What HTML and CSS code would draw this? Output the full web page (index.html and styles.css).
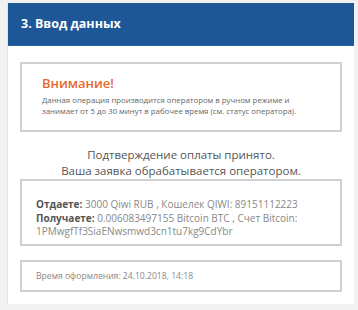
FILE: index.html
```html
<!DOCTYPE html>
<html lang="ru">
<head>
  <meta charset="UTF-8">
  <meta name="viewport" content="width=device-width, initial-scale=1.0">
  <title>Ввод данных</title>
  <link rel="stylesheet" href="styles.css">
</head>
<body>
  <div class="step">
    <div class="step-header">3. Ввод данных</div>
    <div class="step-body">
      <div class="box notice">
        <div class="notice-title">Внимание!</div>
        <p class="notice-text">Данная операция производится оператором в ручном режиме и<br>занимает от 5 до 30 минут в рабочее время (см. статус оператора).</p>
      </div>
      <p class="status">Подтверждение оплаты принято.<br>Ваша заявка обрабатывается оператором.</p>
      <div class="box details">
        <div><b>Отдаете:</b> 3000 Qiwi RUB , Кошелек QIWI: 89151112223</div>
        <div><b>Получаете:</b> 0.006083497155 Bitcoin BTC , Счет Bitcoin:</div>
        <div>1PMwgfTf3SiaENwsmwd3cn1tu7kg9CdYbr</div>
      </div>
      <div class="box created">Время оформления: 24.10.2018, 14:18</div>
    </div>
  </div>
</body>
</html>
```
FILE: styles.css
```css
body {
  font-family: 'Open Sans', 'Liberation Sans', sans-serif;
  background: #f1f1f1;
  color: #555;
  margin: 0;
  padding: 3px 4px 6px 7px;
}
.step {
  background: #fff;
  border-left: 1px solid #e6e6e6;
}
.step-header {
  background: #1e5797;
  color: #fff;
  font-weight: 700;
  font-size: 12.5px;
  height: 43px;
  line-height: 42px;
  padding-left: 13px;
  border-bottom: 1px solid #2c66a8;
  box-sizing: border-box;
}
.step-body {
  padding: 16px 12px 12px 12px;
}
.box {
  border: 2px solid #d0d0d0;
  background: #fff;
}
.notice {
  height: 70px;
  box-sizing: border-box;
  padding: 10px 20px 0 20px;
}
.notice-title {
  color: #e8672a;
  font-weight: 600;
  font-size: 13px;
  line-height: 18px;
  margin-bottom: 3px;
}
.notice-text {
  margin: 0;
  font-size: 7.8px;
  line-height: 11px;
  color: #666;
  white-space: nowrap;
}
.status {
  margin: 0;
  height: 47px;
  padding-top: 15px;
  box-sizing: border-box;
  text-align: center;
  font-size: 11.5px;
  line-height: 16px;
  color: #555;
}
.details {
  height: 67px;
  box-sizing: border-box;
  padding: 17px 14px 0 14px;
  font-size: 10px;
  line-height: 13.5px;
  color: #888;
}
.details b {
  color: #555;
  font-weight: 700;
}
.created {
  margin-top: 14px;
  height: 32px;
  box-sizing: border-box;
  padding-left: 14px;
  font-size: 8.6px;
  line-height: 28px;
  color: #888;
}
```
